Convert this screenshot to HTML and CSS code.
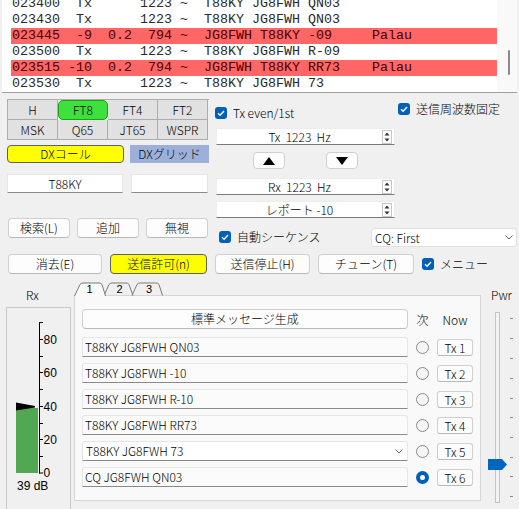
FILE: index.html
```html
<!DOCTYPE html>
<html lang="ja">
<head>
  <meta charset="UTF-8">
  <title>WSJT-X</title>
  <link rel="stylesheet" href="styles.css">
</head>
<body>
  <!-- band activity -->
  <div class="decodes">
    <div class="decode-list">
      <div class="line">023400  Tx      1223 ~  T88KY JG8FWH QN03</div>
      <div class="line">023430  Tx      1223 ~  T88KY JG8FWH QN03</div>
      <div class="line hit">023445  -9  0.2  794 ~  JG8FWH T88KY -09     Palau</div>
      <div class="line">023500  Tx      1223 ~  T88KY JG8FWH R-09</div>
      <div class="line hit">023515 -10  0.2  794 ~  JG8FWH T88KY RR73    Palau</div>
      <div class="line">023530  Tx      1223 ~  T88KY JG8FWH 73</div>
    </div>
    <div class="scrollbar"><span class="thumb"></span></div>
  </div>

  <div class="panel">
    <div class="col-left">
      <div class="modes">
        <span>H</span><span class="on">FT8</span><span>FT4</span><span>FT2</span>
        <span>MSK</span><span>Q65</span><span>JT65</span><span>WSPR</span>
      </div>
      <div class="dx-row">
        <button class="dx-call">DXコール</button>
        <span class="dx-grid">DXグリッド</span>
      </div>
      <div class="dx-row fields">
        <span class="field">T88KY</span>
        <span class="field grid"></span>
      </div>
    </div>

    <div class="col-mid">
      <label class="check">
        <span class="cb"><svg width="12" height="12" viewBox="0 0 12 12"><path d="M3 6.3 5.1 8.3 9 4" fill="none" stroke="#fff" stroke-width="1.4"/></svg></span>
        Tx even/1st
      </label>
      <div class="spin tx-spin">
        <span class="value">Tx  1223  Hz</span>
        <svg class="spin-btn" width="10" height="14" viewBox="0 0 10 14"><rect x="0.5" y="0.5" width="9" height="13" fill="#fdfdfd" stroke="#c8c8c8"/><path d="M2.5 5.5 5 2.5 7.5 5.5Z M2.5 8.5 5 11.5 7.5 8.5Z" fill="#333"/></svg>
      </div>
      <div class="nudge">
        <button><svg width="12" height="8" viewBox="0 0 12 8"><path d="M0 8 6 0 12 8Z" fill="#000"/></svg></button>
        <button><svg width="12" height="8" viewBox="0 0 12 8"><path d="M0 0 6 8 12 0Z" fill="#000"/></svg></button>
      </div>
      <div class="spin rx-spin">
        <span class="value">Rx  1223  Hz</span>
        <svg class="spin-btn" width="10" height="14" viewBox="0 0 10 14"><rect x="0.5" y="0.5" width="9" height="13" fill="#fdfdfd" stroke="#c8c8c8"/><path d="M2.5 5.5 5 2.5 7.5 5.5Z M2.5 8.5 5 11.5 7.5 8.5Z" fill="#333"/></svg>
      </div>
      <div class="spin report">
        <span class="value">レポート -10</span>
        <svg class="spin-btn" width="10" height="14" viewBox="0 0 10 14"><rect x="0.5" y="0.5" width="9" height="13" fill="#fdfdfd" stroke="#c8c8c8"/><path d="M2.5 5.5 5 2.5 7.5 5.5Z M2.5 8.5 5 11.5 7.5 8.5Z" fill="#333"/></svg>
      </div>
    </div>

    <div class="col-right">
      <label class="check">
        <span class="cb"><svg width="12" height="12" viewBox="0 0 12 12"><path d="M3 6.3 5.1 8.3 9 4" fill="none" stroke="#fff" stroke-width="1.4"/></svg></span>
        送信周波数固定
      </label>
    </div>
  </div>

  <div class="row-b">
    <button class="btn">検索(L)</button>
    <button class="btn">追加</button>
    <button class="btn">無視</button>
    <label class="check auto">
      <span class="cb"><svg width="12" height="12" viewBox="0 0 12 12"><path d="M3 6.3 5.1 8.3 9 4" fill="none" stroke="#fff" stroke-width="1.4"/></svg></span>
      自動シーケンス
    </label>
    <div class="combo">
      <span>CQ: First</span>
      <svg width="8" height="5" viewBox="0 0 8 5"><path d="M0.5 0.5 4 4 7.5 0.5" fill="none" stroke="#666"/></svg>
    </div>
  </div>

  <div class="row-c">
    <button class="btn w94">消去(E)</button>
    <button class="btn yellow w97">送信許可(n)</button>
    <button class="btn w95">送信停止(H)</button>
    <button class="btn w96">チューン(T)</button>
    <label class="check">
      <span class="cb"><svg width="12" height="12" viewBox="0 0 12 12"><path d="M3 6.3 5.1 8.3 9 4" fill="none" stroke="#fff" stroke-width="1.4"/></svg></span>
      メニュー
    </label>
  </div>

  <div class="bottom">
    <!-- receive level meter -->
    <div class="meter">
      <div class="meter-label">Rx</div>
      <div class="meter-frame">
        <svg width="63" height="201" viewBox="0 0 63 201">
          <rect x="9" y="100" width="22" height="65" fill="#52a852"/>
          <path d="M9 94.5 28 98 28 99.5 9 102.5Z" fill="#000"/>
          <g stroke="#000" stroke-width="1">
            <line x1="32.5" y1="14" x2="32.5" y2="165.5"/>
            <line x1="32" y1="14.5" x2="36" y2="14.5"/>
            <line x1="32" y1="31.5" x2="36" y2="31.5"/>
            <line x1="32" y1="48.5" x2="36" y2="48.5"/>
            <line x1="32" y1="64.5" x2="36" y2="64.5"/>
            <line x1="32" y1="81.5" x2="36" y2="81.5"/>
            <line x1="32" y1="98.5" x2="36" y2="98.5"/>
            <line x1="32" y1="115.5" x2="36" y2="115.5"/>
            <line x1="32" y1="131.5" x2="36" y2="131.5"/>
            <line x1="32" y1="148.5" x2="36" y2="148.5"/>
            <line x1="32" y1="165" x2="36" y2="165"/>
          </g>
          <g class="scale-text">
            <text x="36.5" y="35.5">80</text>
            <text x="36.5" y="68.5">60</text>
            <text x="36.5" y="102.5">40</text>
            <text x="36.5" y="135.5">20</text>
            <text x="36.5" y="169">0</text>
            <text x="10" y="181.5">39 dB</text>
          </g>
        </svg>
      </div>
    </div>

    <!-- message tabs -->
    <div class="tabs">
      <svg class="tabbar" width="100" height="16" viewBox="0 0 100 16">
        <path d="M58 15.5 63 4.5Q64 3 66 3H82Q84 3 85 4.5L88.5 15.5" fill="none" stroke="#7a7a7a"/>
        <path d="M30 15.5 35 4.5Q36 3 38 3H52Q54 3 55 4.5L59 15.5" fill="none" stroke="#7a7a7a"/>
        <path d="M0.5 16 6 4.5Q7 3 9 3H25Q27 3 28 4.5L31.5 16Z" fill="#f9f9f9"/>
        <path d="M0.5 16 6 4.5Q7 3 9 3H25Q27 3 28 4.5L31.5 16" fill="none" stroke="#7a7a7a"/>
        <g class="tab-text">
          <text x="15.5" y="13">1</text>
          <text x="45.5" y="13">2</text>
          <text x="75" y="13">3</text>
        </g>
      </svg>
      <div class="pane">
        <div class="msg-head">
          <button class="btn">標準メッセージ生成</button>
          <span class="head-next">次</span>
          <span class="head-now">Now</span>
        </div>
        <div class="msg-grid">
          <span class="edit">T88KY JG8FWH QN03</span>
          <span class="radio"></span>
          <button class="btn txbtn">Tx 1</button>

          <span class="edit">T88KY JG8FWH -10</span>
          <span class="radio"></span>
          <button class="btn txbtn">Tx 2</button>

          <span class="edit">T88KY JG8FWH R-10</span>
          <span class="radio"></span>
          <button class="btn txbtn">Tx 3</button>

          <span class="edit">T88KY JG8FWH RR73</span>
          <span class="radio"></span>
          <button class="btn txbtn">Tx 4</button>

          <span class="edit drop">
            <span>T88KY JG8FWH 73</span>
            <svg width="8" height="5" viewBox="0 0 8 5"><path d="M0.5 0.5 4 4 7.5 0.5" fill="none" stroke="#666"/></svg>
          </span>
          <span class="radio"></span>
          <button class="btn txbtn">Tx 5</button>

          <span class="edit">CQ JG8FWH QN03</span>
          <span class="radio on"></span>
          <button class="btn txbtn">Tx 6</button>
        </div>
      </div>
    </div>

    <!-- power slider -->
    <div class="pwr">
      <div class="pwr-label">Pwr</div>
      <svg class="slider" width="38" height="204" viewBox="0 0 38 204">
        <rect x="14.5" y="7.5" width="4" height="190" fill="#f3f3f3" stroke="#c4c4c4"/>
        <g stroke="#8a8a8a">
          <line x1="29" y1="13.5" x2="32" y2="13.5"/>
          <line x1="29" y1="33.5" x2="32" y2="33.5"/>
          <line x1="29" y1="53.5" x2="32" y2="53.5"/>
          <line x1="29" y1="73.5" x2="32" y2="73.5"/>
          <line x1="29" y1="93.5" x2="32" y2="93.5"/>
          <line x1="29" y1="112.5" x2="32" y2="112.5"/>
          <line x1="29" y1="132.5" x2="32" y2="132.5"/>
          <line x1="29" y1="152.5" x2="32" y2="152.5"/>
          <line x1="29" y1="171.5" x2="32" y2="171.5"/>
          <line x1="29" y1="191.5" x2="32" y2="191.5"/>
        </g>
        <path d="M7 154H21L26 159.5 21 165H7Z" fill="#0067c0"/>
      </svg>
    </div>
  </div>
</body>
</html>
```

FILE: styles.css
```css
* {
  box-sizing: border-box;
}
body {
  margin: 0;
  width: 519px;
  height: 509px;
  overflow: hidden;
  background: #f0f0f0;
  color: #000;
  font-family: "Noto Sans CJK JP", "Noto Sans", sans-serif;
  font-size: 12px;
  font-weight: 300;
}
button {
  font: inherit;
  color: inherit;
  padding: 0;
  margin: 0;
}

/* decoded messages list */
.decodes {
  display: flex;
  height: 93px;
  margin: 0 2px;
  background: #fff;
  border-bottom: 1px solid #a0a0a0;
}
.decode-list {
  flex: 1;
  padding-left: 9px;
  overflow: hidden;
  font-family: "Liberation Mono", monospace;
  font-size: 13.33px;
  font-weight: 400;
  color: #2a2a2a;
}
.decode-list .line {
  height: 16px;
  line-height: 16px;
  padding-left: 1px;
  white-space: pre;
}
.decode-list .line:first-child {
  margin-top: -4px;
}
.decode-list .hit {
  background: #ff6666;
  color: #4a0000;
}
.scrollbar {
  width: 20px;
  background: #f9f9f9;
  display: flex;
  justify-content: flex-end;
  align-items: flex-start;
  padding: 50px 7px 0 0;
}
.scrollbar .thumb {
  width: 2px;
  height: 25px;
  background: #8a8a8a;
  border-radius: 1px;
}

/* controls above the buttons */
.panel {
  display: flex;
  align-items: flex-start;
  padding-left: 7px;
}
.col-left {
  width: 202px;
  padding-top: 6px;
}
.modes {
  display: grid;
  grid-template-columns: repeat(4, 50px);
  border-top: 1px solid #adadad;
  border-left: 1px solid #adadad;
}
.modes span {
  height: 20px;
  line-height: 19px;
  text-align: center;
  background: #e1e1e1;
  border-right: 1px solid #adadad;
  border-bottom: 1px solid #adadad;
}
.modes .on {
  background: #3ee03e;
  border: 1px solid #1e9e1e;
  border-radius: 5px;
  line-height: 18px;
}
.dx-row {
  display: flex;
  margin-top: 5px;
}
.dx-call {
  width: 117px;
  height: 18px;
  line-height: 16px;
  background: #ffff00;
  border: 1px solid #606060;
  border-radius: 4px;
}
.dx-grid {
  width: 79px;
  height: 18px;
  margin-left: 6px;
  line-height: 18px;
  text-align: center;
  background: #9cb0da;
}
.fields {
  margin-top: 11px;
}
.field {
  width: 116px;
  height: 19px;
  line-height: 17px;
  text-align: center;
  background: #fff;
  border: 1px solid #e6e6e6;
  border-bottom-color: #8a8a8a;
}
.field.grid {
  width: 77px;
  margin-left: 8px;
}

.col-mid {
  width: 181px;
  margin-left: 6px;
}
.check {
  display: flex;
  align-items: center;
  gap: 6px;
  height: 16px;
  line-height: 16px;
  white-space: nowrap;
}
.cb {
  display: flex;
  width: 12px;
  height: 12px;
  background: #005fb8;
  border-radius: 3px;
}
.col-mid .check {
  margin-top: 12px;
}
.spin {
  display: flex;
  align-items: center;
  width: 179px;
  height: 17px;
  margin-left: 1px;
  background: #fff;
  border: 1px solid #ededed;
  border-bottom-color: #7a7a7a;
}
.spin .value {
  flex: 1;
  text-align: center;
  line-height: 15px;
  white-space: pre;
}
.spin-btn {
  margin-right: 2px;
}
.tx-spin {
  margin-top: 7px;
}
.nudge {
  display: flex;
  gap: 41px;
  margin-top: 7px;
  padding-left: 38px;
}
.nudge button {
  display: flex;
  align-items: center;
  justify-content: center;
  width: 32px;
  height: 17px;
  background: #fdfdfd;
  border: 1px solid #d0d0d0;
  border-radius: 4px;
}
.rx-spin {
  margin-top: 9px;
}
.report {
  margin-top: 6px;
}
.col-right {
  margin-left: 2px;
  padding-top: 8px;
}

/* button rows */
.btn {
  height: 20px;
  line-height: 18px;
  text-align: center;
  background: #fdfdfd;
  border: 1px solid #d0d0d0;
  border-bottom-color: #b8b8b8;
  border-radius: 4px;
  white-space: nowrap;
}
.btn.yellow {
  background: #ffff00;
  border-color: #606060;
}
.row-b {
  display: flex;
  align-items: flex-start;
  gap: 7px;
  padding-left: 8px;
}
.row-b .btn {
  width: 62px;
}
.auto {
  margin-top: 11px;
  margin-left: 4px;
}
.combo {
  display: flex;
  align-items: center;
  justify-content: space-between;
  width: 146px;
  height: 19px;
  margin: 10px 2px 0 auto;
  padding: 0 3px 0 3px;
  background: #fff;
  border: 1px solid #e0e0e0;
  border-radius: 3px;
}
.row-c {
  display: flex;
  align-items: center;
  gap: 8px;
  height: 20px;
  margin-top: 7px;
  padding-left: 8px;
}
.w94 { width: 94px; }
.w95 { width: 95px; }
.w96 { width: 96px; }
.w97 { width: 97px; }

/* lower area: meter, message tabs, power */
.bottom {
  display: flex;
  margin-top: 6px;
}
.meter {
  width: 65px;
  margin-left: 6px;
}
.meter-label,
.pwr-label {
  height: 23px;
  padding-top: 7px;
  line-height: 16px;
}
.meter-label {
  padding-left: 20px;
}
.meter-frame {
  height: 202px;
  margin-top: 4px;
  border: 1px solid #c8c8c8;
  border-bottom: none;
}
.meter-frame svg {
  display: block;
}
.scale-text text {
  font-family: "Liberation Sans", sans-serif;
  font-size: 12px;
  font-weight: 400;
  fill: #000;
}

.tabs {
  width: 407px;
  margin-left: 3px;
}
.tabbar {
  display: block;
  position: relative;
  z-index: 1;
  margin-bottom: -1px;
}
.tab-text text {
  font-family: "Liberation Sans", sans-serif;
  font-size: 11px;
  font-weight: 400;
  text-anchor: middle;
  fill: #000;
}
.pane {
  height: 206px;
  padding: 13px 0 0 7px;
  background: #f9f9f9;
  border: 1px solid #d6d6d6;
}
.msg-head,
.msg-grid {
  display: grid;
  grid-template-columns: 326px 13px 36px;
  column-gap: 8px;
  align-items: center;
}
.msg-head {
  height: 20px;
  margin-bottom: 8px;
}
.head-next,
.head-now {
  text-align: center;
  white-space: nowrap;
}
.msg-grid {
  grid-auto-rows: 20px;
  row-gap: 6px;
}
.edit {
  height: 20px;
  padding-left: 2px;
  line-height: 18px;
  background: #fbfbfb;
  border: 1px solid #e6e6e6;
  border-bottom-color: #8a8a8a;
  border-radius: 3px 3px 0 0;
}
.edit.drop {
  display: flex;
  align-items: center;
  justify-content: space-between;
  padding: 0 4px 0 3px;
  background: #fff;
}
.radio {
  width: 13px;
  height: 13px;
  background: #f5f5f5;
  border: 1px solid #8a8a8a;
  border-radius: 50%;
}
.radio.on {
  background: #fff;
  border: 4px solid #005fb8;
}
.txbtn {
  width: 36px;
  height: 17px;
  line-height: 15px;
  border-radius: 3px;
}

.pwr {
  flex: 1;
}
.pwr-label {
  padding-left: 3px;
  text-align: center;
}
.slider {
  display: block;
  margin-top: 2px;
}
```
